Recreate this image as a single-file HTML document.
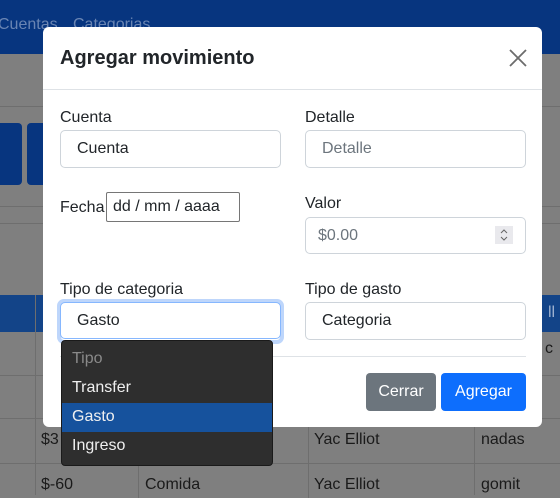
<!DOCTYPE html>
<html><head><meta charset="utf-8"><style>
*{box-sizing:border-box;margin:0;padding:0}
body{width:560px;height:492px;overflow:hidden;position:relative;font-family:"Liberation Sans","DejaVu Sans",sans-serif;background:#7f7f7f;color:#212529;font-size:16px}
.abs{position:absolute}
.nav{left:0;top:0;width:560px;height:54px;background:#07357f}
.navt{top:16px;font-size:16px;color:#6a85b3}
.inp{position:absolute;background:#fff;border:1px solid #ced4da;border-radius:5px;padding-left:16px;display:flex;align-items:center;font-size:16px}
.lbl{position:absolute;font-size:16px;color:#212529}
.row{position:absolute;left:0;width:560px;height:1px;background:#6e6e6e}
.vl{position:absolute;width:1px;background:#6e6e6e}
.tt{position:absolute;font-size:16px;color:#1a1a1a}
</style></head><body>
<div class="abs nav"></div>
<div class="abs navt" style="left:-2px">Cuentas</div>
<div class="abs navt" style="left:73px">Categorias</div>
<div class="abs" style="left:0;top:106px;width:560px;height:1px;background:#6e6e6e"></div>
<div class="abs" style="left:-6px;top:123px;width:28px;height:62px;background:#07357f;border-radius:4px"></div>
<div class="abs" style="left:27px;top:123px;width:30px;height:62px;background:#07357f;border-radius:4px"></div>
<div class="abs" style="left:0;top:206px;width:560px;height:1px;background:#6e6e6e"></div>
<div class="abs" style="left:0;top:223px;width:560px;height:1px;background:#6e6e6e"></div>
<div class="abs" style="left:0;top:295px;width:560px;height:37px;background:#134488"></div>
<div class="row" style="top:375px"></div>
<div class="row" style="top:418px"></div>
<div class="row" style="top:463px"></div>
<div class="vl" style="left:35px;top:295px;height:200px"></div>
<div class="vl" style="left:138px;top:418px;height:80px"></div>
<div class="vl" style="left:308px;top:418px;height:80px"></div>
<div class="vl" style="left:474px;top:295px;height:200px"></div>
<div class="tt" style="left:545px;top:340px">c</div>
<div class="tt" style="left:548px;top:304px;color:#9fb2d0">ll</div>
<div class="tt" style="left:41px;top:431px">$3</div>
<div class="tt" style="left:314px;top:431px">Yac Elliot</div>
<div class="tt" style="left:481px;top:431px">nadas</div>
<div class="tt" style="left:41px;top:476px">$-60</div>
<div class="tt" style="left:145px;top:476px">Comida</div>
<div class="tt" style="left:314px;top:476px">Yac Elliot</div>
<div class="tt" style="left:481px;top:476px">gomit</div>

<div class="abs" style="left:43px;top:27px;width:499px;height:400px;background:#fff;border-radius:6px"></div>
<div class="abs" style="left:60px;top:47px;font-size:20px;font-weight:bold;color:#212529">Agregar movimiento</div>
<svg class="abs" style="left:509px;top:49px" width="18" height="18"><path d="M1 1L17 17M17 1L1 17" stroke="#6c6c6c" stroke-width="1.8"/></svg>
<div class="abs" style="left:43px;top:89px;width:499px;height:1px;background:#dee2e6"></div>

<div class="lbl" style="left:60px;top:109px">Cuenta</div>
<div class="inp" style="left:60px;top:130px;width:221px;height:38px">Cuenta</div>
<div class="lbl" style="left:305px;top:109px">Detalle</div>
<div class="inp" style="left:305px;top:130px;width:221px;height:38px;color:#6c757d">Detalle</div>
<div class="lbl" style="left:60px;top:199px">Fecha</div>
<div class="abs" style="left:106px;top:192px;width:134px;height:30px;border:1px solid #767676;border-radius:2px;padding-left:6px;line-height:28px">dd / mm / aaaa</div>
<div class="lbl" style="left:305px;top:195px">Valor</div>
<div class="inp" style="left:305px;top:217px;width:221px;height:37px;padding-left:12px;color:#6c757d">$0.00</div>
<div class="abs" style="left:495px;top:226px;width:18px;height:18px;background:#e9e9ed"></div>
<svg class="abs" style="left:495px;top:226px" width="18" height="18"><path d="M6 7L9 4L12 7M6 11L9 14L12 11" stroke="#666" fill="none" stroke-width="1"/></svg>
<div class="lbl" style="left:60px;top:281px">Tipo de categoria</div>
<div class="inp" style="left:57px;top:299px;width:227px;height:45px;border:4px solid #bed6fb;border-radius:7px;padding:0"></div>
<div class="inp" style="left:60px;top:302px;width:221px;height:37px;border-color:#86b7fe">Gasto</div>
<div class="lbl" style="left:305px;top:281px">Tipo de gasto</div>
<div class="inp" style="left:305px;top:302px;width:221px;height:38px">Categoria</div>
<div class="abs" style="left:60px;top:356px;width:466px;height:1px;background:#dee2e6"></div>
<div class="abs" style="left:366px;top:373px;width:70px;height:38px;background:#6c757d;color:#fff;border-radius:4px;display:flex;align-items:center;justify-content:center">Cerrar</div>
<div class="abs" style="left:441px;top:373px;width:85px;height:38px;background:#0d6efd;color:#fff;border-radius:4px;display:flex;align-items:center;justify-content:center">Agregar</div>

<div class="abs" style="left:61px;top:340px;width:212px;height:126px;background:#2e2e2e;border:1px solid #1a1a1a;border-radius:4px;color:#f0f0f0;font-size:16px">
<div style="position:absolute;left:10px;top:9px;color:#8a8a8a">Tipo</div>
<div style="position:absolute;left:10px;top:38px">Transfer</div>
<div style="position:absolute;left:0;top:62px;width:210px;height:29px;background:#16529d"></div>
<div style="position:absolute;left:10px;top:67px">Gasto</div>
<div style="position:absolute;left:10px;top:96px">Ingreso</div>
</div>
</body></html>
